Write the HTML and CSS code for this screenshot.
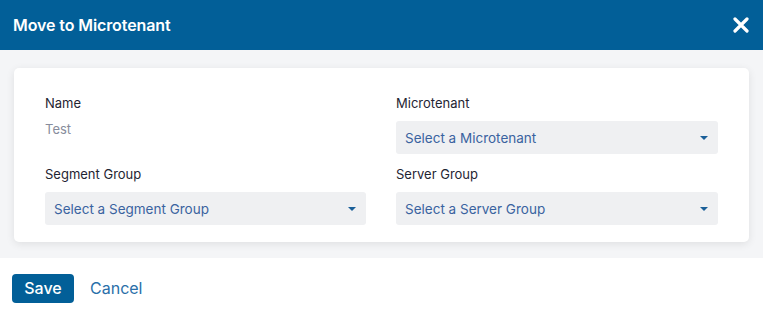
FILE: index.html
```html
<!DOCTYPE html>
<html>
<head>
<meta charset="utf-8">
<link rel="stylesheet" href="styles.css">
</head>
<body>
<div class="modal">
  <header class="modal-header">
    <h1 class="modal-title">Move to Microtenant</h1>
    <button class="close-btn" aria-label="Close">
      <svg width="16" height="16" viewBox="0 0 16 16"><path d="M2 2 L14 14 M14 2 L2 14" stroke="#fff" stroke-width="3.2" stroke-linecap="round"/></svg>
    </button>
  </header>
  <main class="modal-body">
    <section class="card">
      <div class="field">
        <label class="field-label">Name</label>
        <div class="field-value">Test</div>
      </div>
      <div class="field">
        <label class="field-label">Microtenant</label>
        <div class="select"><span class="select-text">Select a Microtenant</span><span class="caret"></span></div>
      </div>
      <div class="field">
        <label class="field-label">Segment Group</label>
        <div class="select"><span class="select-text">Select a Segment Group</span><span class="caret"></span></div>
      </div>
      <div class="field">
        <label class="field-label">Server Group</label>
        <div class="select"><span class="select-text">Select a Server Group</span><span class="caret"></span></div>
      </div>
    </section>
  </main>
  <footer class="modal-footer">
    <button class="btn-primary">Save</button>
    <button class="btn-link">Cancel</button>
  </footer>
</div>
</body>
</html>
```
FILE: styles.css
```css
* { box-sizing: border-box; }
html, body { margin: 0; padding: 0; }
body {
  font-family: Inter, "Noto Sans", sans-serif;
  background: #fff;
  width: 763px;
  height: 318px;
  overflow: hidden;
}
.modal { display: flex; flex-direction: column; height: 318px; }
.modal-header {
  height: 50px;
  background: #025f98;
  display: flex;
  align-items: center;
  justify-content: space-between;
  padding: 0 14px 0 13px;
}
.modal-title {
  margin: 0;
  color: #fff;
  font-size: 16px;
  font-weight: 600;
  letter-spacing: -0.1px;
}
.close-btn {
  background: none;
  border: 0;
  padding: 0;
  width: 16px;
  height: 16px;
  display: flex;
  cursor: pointer;
}
.modal-body {
  background: #f4f5f7;
  padding: 18px 14px 16px 14px;
}
.card {
  background: #fff;
  border-radius: 5px;
  box-shadow: 0 2px 8px rgba(0,0,0,0.09);
  padding: 27px 31px 17px 31px;
  display: grid;
  grid-template-columns: 321px 322px;
  column-gap: 30px;
  row-gap: 12px;
}
.field { display: flex; flex-direction: column; }
.field-label {
  font-size: 13px;
  line-height: 16px;
  color: #1f2533;
  margin-bottom: 10px;
}
.field-value {
  font-size: 13px;
  line-height: 16px;
  color: #878c9c;
}
.select {
  height: 33px;
  background: #eff0f2;
  border-radius: 3px;
  display: flex;
  align-items: center;
  justify-content: space-between;
  padding: 0 10px 0 9px;
}
.select-text {
  font-size: 13.5px;
  color: #3a63a0;
}
.caret {
  width: 0; height: 0;
  border-left: 4px solid transparent;
  border-right: 4px solid transparent;
  border-top: 4px solid #1a5f98;
}
.modal-footer {
  flex: 1;
  display: flex;
  align-items: center;
  padding: 0 12px;
  gap: 16px;
}
.btn-primary {
  background: #025f98;
  color: #fff;
  border: 0;
  border-radius: 4px;
  height: 29px;
  width: 62px;
  font-family: Inter, sans-serif;
  font-size: 16px;
  font-weight: 500;
  padding: 0;
}
.btn-link {
  background: none;
  border: 0;
  padding: 0;
  color: #2a6fa9;
  font-family: Inter, sans-serif;
  font-size: 16px;
}
```
